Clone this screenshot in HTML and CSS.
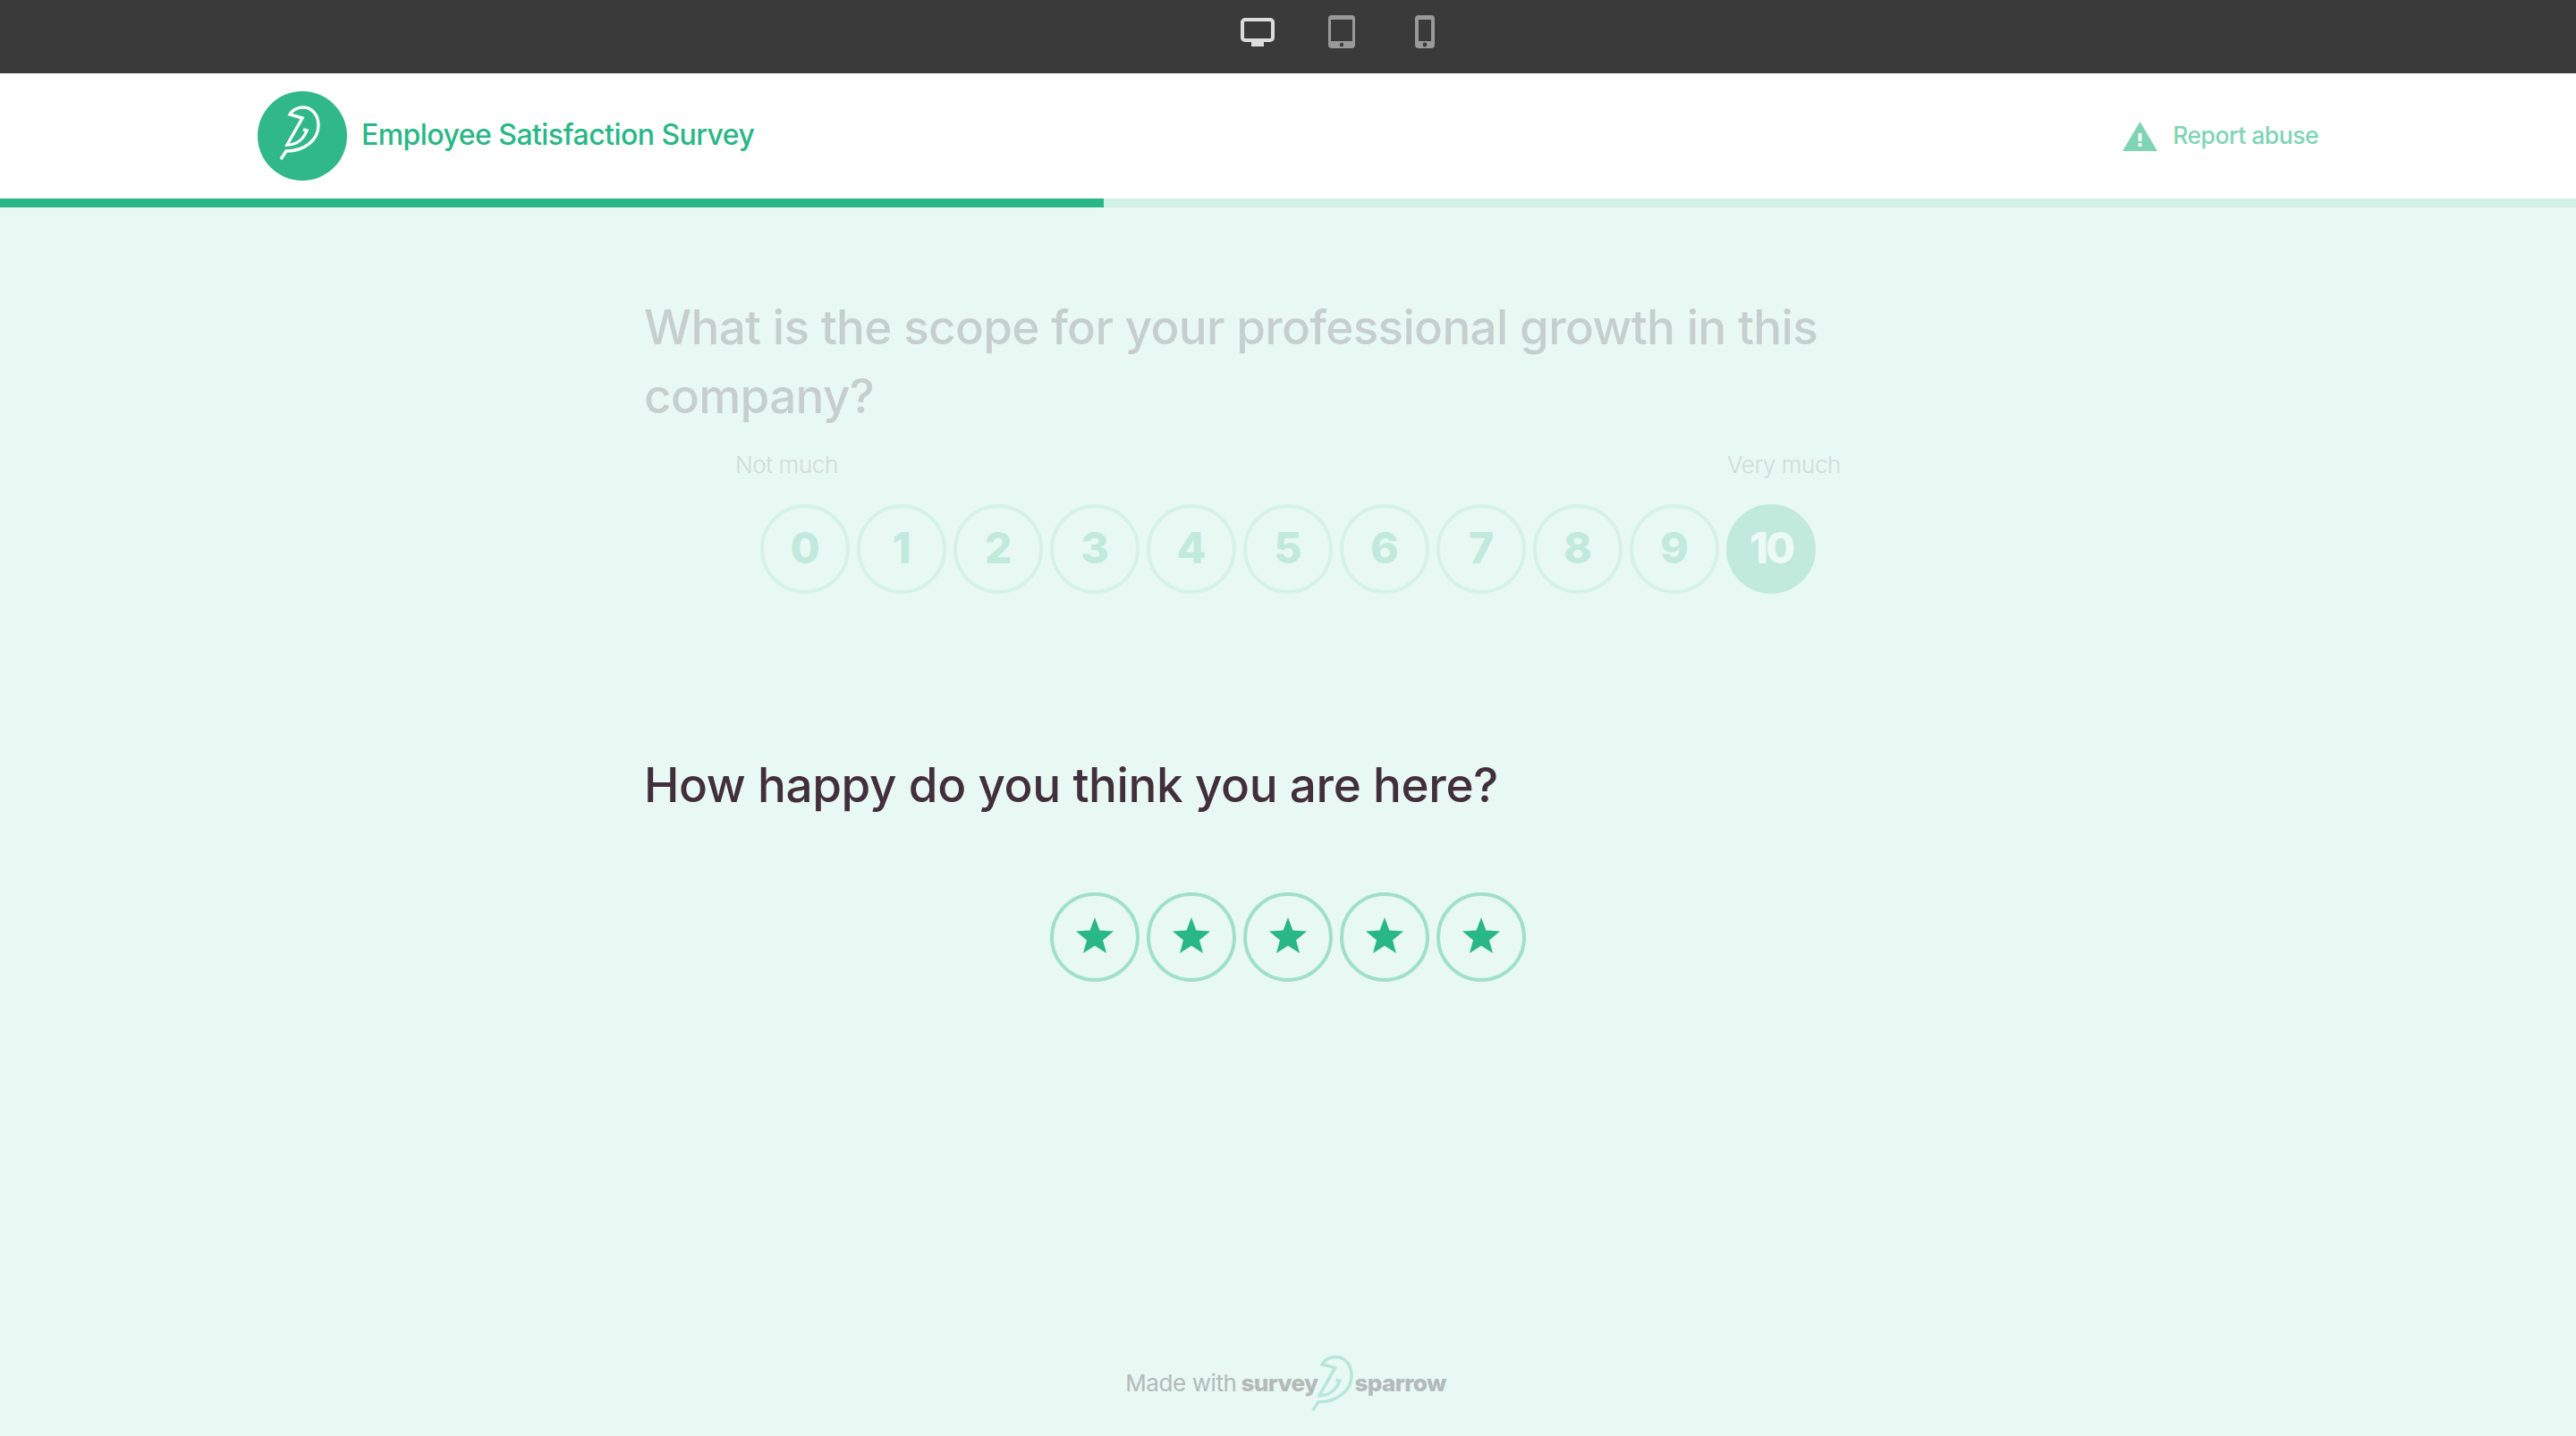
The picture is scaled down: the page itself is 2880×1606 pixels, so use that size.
FILE: index.html
```html
<!DOCTYPE html>
<html lang="en">
<head>
<meta charset="utf-8">
<title>Employee Satisfaction Survey</title>
<link rel="stylesheet" href="styles.css">
</head>
<body>
<svg class="defs" width="0" height="0" aria-hidden="true">
  <symbol id="bird" viewBox="0 0 100 100">
    <path fill="none" stroke="currentColor" stroke-width="3.4" stroke-linejoin="miter" d="M26 76 L32 67 C52 67 68 55 68 38 C68 26 60 18 51 18 C44 18 38 22 36 26 L50 30 L33 60 C45 60 52 52 55 44 L51 43"/>
  </symbol>
</svg>
<div class="preview-bar">
  <span class="device">
    <svg width="38" height="32" viewBox="0 0 38 32"><rect x="2" y="2" width="34" height="23" rx="3" fill="none" stroke="#dcdcdc" stroke-width="4"/><rect x="12" y="27" width="14" height="5" fill="#dcdcdc"/></svg>
  </span>
  <span class="device">
    <svg width="30" height="37" viewBox="0 0 30 37"><rect width="30" height="37" rx="4" fill="#999"/><rect x="3" y="5" width="24" height="24" fill="#3a3a3a"/><circle cx="15" cy="33" r="2.2" fill="#3a3a3a"/></svg>
  </span>
  <span class="device">
    <svg width="22" height="37" viewBox="0 0 22 37"><rect width="22" height="37" rx="4" fill="#999"/><rect x="4" y="5" width="14" height="24" fill="#3a3a3a"/><circle cx="11" cy="33" r="2.4" fill="#3a3a3a"/></svg>
  </span>
</div>
<header class="site-header">
  <div class="brand">
    <span class="brand-logo"><svg width="100" height="100"><use href="#bird"/></svg></span>
    <span class="brand-name">Employee Satisfaction Survey</span>
  </div>
  <a class="report">
    <svg width="39" height="33" viewBox="0 0 39 33"><path d="M19.5 0 L39 33 H0 Z" fill="#7fd4b5"/><rect x="17.6" y="13" width="3.8" height="9" fill="#fff"/><rect x="17.6" y="24" width="3.8" height="4" fill="#fff"/></svg>
    <span class="report-text">Report abuse</span>
  </a>
</header>
<div class="progress"><div class="progress-fill" style="width:1234px"></div></div>
<main class="survey">
  <section class="question question-faded">
    <h2 class="q-title">What is the scope for your professional growth in this company?</h2>
    <div class="scale-labels"><span>Not much</span><span>Very much</span></div>
    <div class="scale">
      <span class="num">0</span><span class="num">1</span><span class="num">2</span><span class="num">3</span><span class="num">4</span><span class="num">5</span><span class="num">6</span><span class="num">7</span><span class="num">8</span><span class="num">9</span><span class="num num-on">10</span>
    </div>
  </section>
  <section class="question question-active">
    <h2 class="q-title">How happy do you think you are here?</h2>
    <div class="scale stars">
      <span class="star"><svg width="42" height="40" viewBox="0 0 42 40"><path d="M21 0 L26.4 14.6 L42 15.4 L30 25.4 L34 40 L21 31.8 L8 40 L12 25.4 L0 15.4 L15.6 14.6 Z"/></svg></span>
      <span class="star"><svg width="42" height="40" viewBox="0 0 42 40"><path d="M21 0 L26.4 14.6 L42 15.4 L30 25.4 L34 40 L21 31.8 L8 40 L12 25.4 L0 15.4 L15.6 14.6 Z"/></svg></span>
      <span class="star"><svg width="42" height="40" viewBox="0 0 42 40"><path d="M21 0 L26.4 14.6 L42 15.4 L30 25.4 L34 40 L21 31.8 L8 40 L12 25.4 L0 15.4 L15.6 14.6 Z"/></svg></span>
      <span class="star"><svg width="42" height="40" viewBox="0 0 42 40"><path d="M21 0 L26.4 14.6 L42 15.4 L30 25.4 L34 40 L21 31.8 L8 40 L12 25.4 L0 15.4 L15.6 14.6 Z"/></svg></span>
      <span class="star"><svg width="42" height="40" viewBox="0 0 42 40"><path d="M21 0 L26.4 14.6 L42 15.4 L30 25.4 L34 40 L21 31.8 L8 40 L12 25.4 L0 15.4 L15.6 14.6 Z"/></svg></span>
    </div>
  </section>
  <footer class="made-with">
    <span>Made with</span>
    <b class="wm-first">survey</b>
    <svg class="wm-bird" width="103" height="103"><use href="#bird"/></svg>
    <b class="wm-last">sparrow</b>
  </footer>
</main>
</body>
</html>
```
FILE: styles.css
```css
* { box-sizing: border-box; }
html, body { margin: 0; height: 1606px; overflow: hidden; }
body {
  display: flex;
  flex-direction: column;
  background: #e8f8f3;
  font-family: "Inter", "Liberation Sans", sans-serif;
}
.defs { position: absolute; }
.preview-bar {
  height: 82px;
  flex: none;
  background: #3a3a3a;
  display: flex;
  justify-content: center;
  align-items: flex-start;
  padding-left: 120px;
  padding-top: 17px;
}
.device { width: 94px; display: flex; justify-content: center; }
.device svg { display: block; }
.device:first-child { padding-top: 3px; }
.device:last-child { padding-right: 2px; }
.site-header {
  height: 140px;
  flex: none;
  background: #fff;
  display: flex;
  align-items: center;
  justify-content: space-between;
  padding: 0 288px;
}
.brand { display: flex; align-items: center; gap: 16px; }
.brand-logo {
  width: 100px;
  height: 100px;
  border-radius: 50%;
  background: #31b88a;
  color: #fff;
  display: block;
}
.brand-logo svg { display: block; }
.brand-name { font-size: 32px; font-weight: 500; color: #2ab787; letter-spacing: -0.55px; padding-bottom: 3px; }
.report { display: flex; align-items: center; gap: 17px; color: #7fd4b5; font-size: 26.5px; font-weight: 500; letter-spacing: -0.5px; }
.report-text { padding-bottom: 3px; }
.progress { height: 10px; flex: none; background: #d4f1e7; }
.progress-fill { height: 100%; background: #2ab787; }
.survey {
  flex: 1;
  display: flex;
  flex-direction: column;
  width: 1440px;
  margin: 0 auto;
}
.q-title {
  margin: 0;
  font-size: 53px;
  line-height: 77px;
  font-weight: 500;
  color: #432f3c;
}
.question-faded { padding-top: 96px; opacity: 0.2; }
.question-faded .q-title { letter-spacing: -0.7px; }
.question-active { padding-top: 176px; }
.question-active .q-title { letter-spacing: -0.4px; }
.scale-labels {
  display: flex;
  justify-content: space-between;
  width: 1236px;
  margin: 18px auto 0;
  font-size: 26px;
  line-height: 40px;
  font-weight: 300;
  color: #432f3c;
  letter-spacing: -0.4px;
  opacity: 0.7;
}
.scale { display: flex; justify-content: center; gap: 8px; margin-top: 24px; }
.num, .star {
  width: 100px;
  height: 100px;
  border-radius: 50%;
  display: flex;
  align-items: center;
  justify-content: center;
  flex: none;
}
.num {
  border: 4px solid #8edcc2;
  color: #2ab787;
  font-size: 48px;
  font-weight: 800;
  padding-bottom: 3px;
}
.num-on { background: #2ab787; border-color: #2ab787; color: #fff; letter-spacing: -3px; }
.stars { margin-top: 81px; }
.star { border: 4px solid #a0e0cb; padding-bottom: 5px; }
.star svg { display: block; fill: #2ab787; }
.made-with {
  margin-top: auto;
  padding: 0 5px 29px 0;
  height: 90px;
  display: flex;
  align-items: center;
  justify-content: center;
  color: #b3bab9;
  font-size: 26px;
  letter-spacing: -0.4px;
}
.made-with b { font-weight: 800; color: #b3bab9; letter-spacing: -0.6px; }
.wm-first { margin-left: 5px; }
.wm-bird { color: #b5e8da; margin: 8px -29px 0 -33px; }
```
